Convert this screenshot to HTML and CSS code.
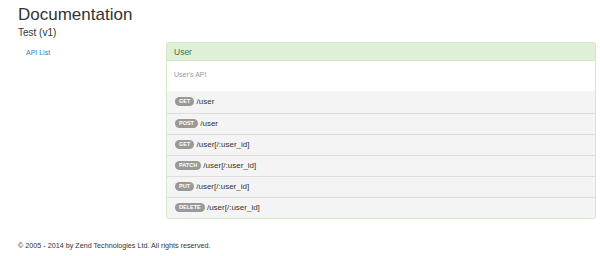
FILE: index.html
```html
<!DOCTYPE html>
<html lang="en">
<head>
  <meta charset="UTF-8" />
  <title>Documentation</title>
  <link rel="stylesheet" href="styles.css">
</head>
<body>
  <div class="container">
    <h1>Documentation</h1>
    <h3>Test (v1)</h3>

    <div class="row">
      <ul class="sidenav">
        <li><a href="#">API List</a></li>
      </ul>

      <div class="panel">
        <div class="panel-heading">User</div>
        <div class="panel-body">User's API</div>
        <ul class="ops">
          <li><span class="method">GET</span> /user</li>
          <li><span class="method">POST</span> /user</li>
          <li><span class="method">GET</span> /user[/:user_id]</li>
          <li><span class="method">PATCH</span> /user[/:user_id]</li>
          <li><span class="method">PUT</span> /user[/:user_id]</li>
          <li><span class="method">DELETE</span> /user[/:user_id]</li>
        </ul>
      </div>
    </div>

    <footer>&copy; 2005 - 2014 by Zend Technologies Ltd. All rights reserved.</footer>
  </div>
</body>
</html>
```

FILE: styles.css
```css
* {
  box-sizing: border-box;
}

body {
  margin: 0;
  font-family: "Liberation Sans", Arial, sans-serif;
  color: #333;
  background: #fff;
}

.container {
  padding: 0 4px 0 18px;
}

h1 {
  font-size: 17px;
  font-weight: normal;
  margin: 0;
  padding-top: 5px;
  line-height: 20px;
}

h3 {
  font-size: 10px;
  font-weight: normal;
  margin: 0;
  line-height: 15px;
}

.row {
  display: flex;
  margin-top: 2px;
}

.sidenav {
  list-style: none;
  margin: 0;
  padding: 0 0 0 8px;
  width: 148px;
  flex-shrink: 0;
}

.sidenav a {
  display: block;
  font-size: 7px;
  color: #337ab7;
  text-decoration: none;
  line-height: 10px;
  padding-top: 6px;
}

.panel {
  flex: 1;
  border: 1px solid #d6e9c6;
  border-radius: 2px;
  overflow: hidden;
}

.panel-heading {
  background: #dff0d8;
  color: #3c763d;
  font-size: 8.5px;
  height: 18px;
  line-height: 18px;
  padding: 0 7px;
  border-bottom: 1px solid #d6e9c6;
}

.panel-body {
  font-size: 7px;
  color: #999;
  height: 30px;
  padding: 10px 7px 0;
}

.ops {
  list-style: none;
  margin: 0;
  padding: 0;
}

.ops li {
  background: #f4f4f4;
  border-top: 1px solid #ddd;
  font-size: 8px;
  color: #333;
  height: 21px;
  line-height: 20px;
  padding: 0 8px;
}

.ops li:first-child {
  border-top: none;
  height: 22px;
  line-height: 22px;
}

.method {
  display: inline-block;
  background: #999;
  color: #fff;
  font-size: 5.5px;
  font-weight: bold;
  line-height: 9px;
  padding: 0 4px;
  border-radius: 5px;
  vertical-align: 1px;
}

footer {
  font-size: 7.2px;
  color: #333;
  margin-top: 22px;
}
```
